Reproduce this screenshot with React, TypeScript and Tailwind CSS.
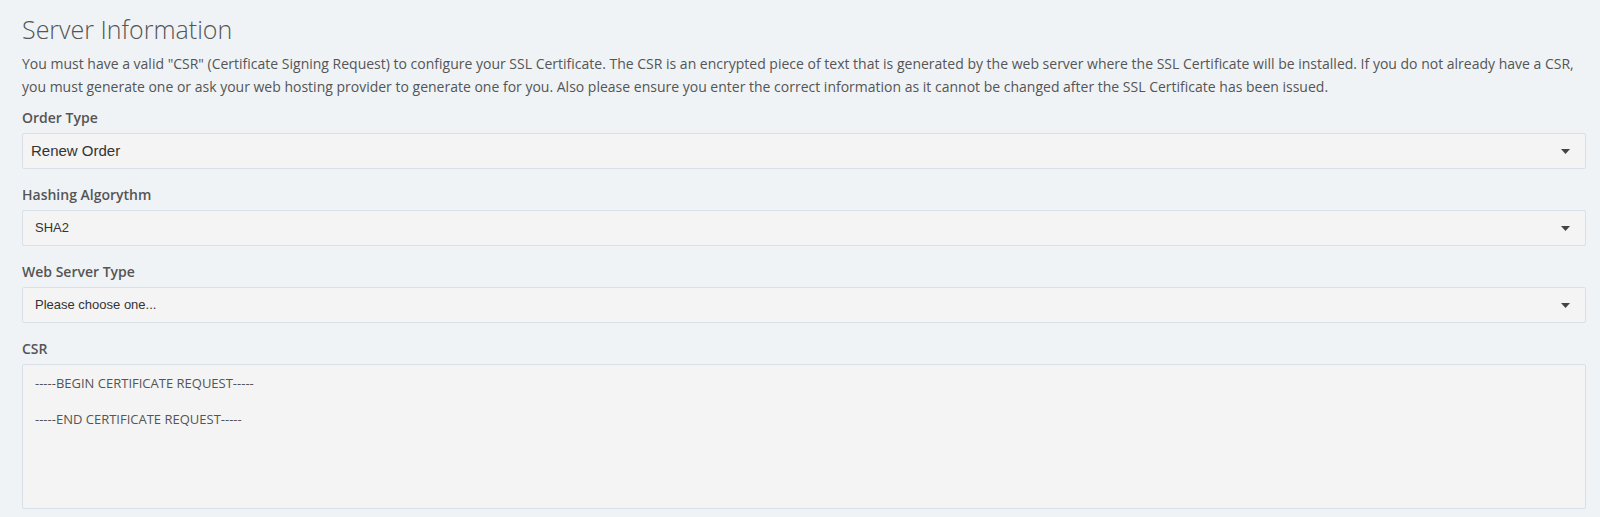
import React from "react";

const caret = (
    <svg width="9" height="5" viewBox="0 0 9 5" className="shrink-0">
        <path d="M0 0 H9 L4.5 5 Z" fill="#444" />
    </svg>
);

function SelectBox({ value, big }: { value: string; big?: boolean }) {
    return (
        <div className="h-[36px] flex items-center justify-between bg-[#f4f4f4] border border-[#d9e0e8] rounded-[2px] pr-[15px]">
            <span
                className={big ? "pl-[8px] text-[15px] text-[#333]" : "pl-[12px] text-[13px] text-[#333]"}
                style={{ fontFamily: '"Liberation Sans", Arial, sans-serif' }}
            >
                {value}
            </span>
            {caret}
        </div>
    );
}

function Field({ label, children }: { label: string; children: React.ReactNode }) {
    return (
        <div className="mt-[16px] first:mt-0">
            <div className="text-[14px] leading-[20px] font-semibold text-[#555] mb-[5px]">{label}</div>
            {children}
        </div>
    );
}

export default function App() {
    return (
        <div
            className="min-h-screen bg-[#eff3f6] pl-[22px] pr-[14px] pt-[13px]"
            style={{ fontFamily: '"Open Sans", "Noto Sans", sans-serif' }}
        >
            {/* Heading */}
            <h2 className="text-[25px] leading-[32px] font-light text-[#555]">Server Information</h2>
            <p className="mt-[7px] text-[14px] leading-[23px] text-[#555]">
                You must have a valid "CSR" (Certificate Signing Request) to configure your SSL Certificate. The CSR is an
                encrypted piece of text that is generated by the web server where the SSL Certificate will be installed. If
                you do not already have a CSR, you must generate one or ask your web hosting provider to generate one for
                you. Also please ensure you enter the correct information as it cannot be changed after the SSL Certificate
                has been issued.
            </p>

            {/* Form */}
            <div className="mt-[10px]">
                <Field label="Order Type">
                    <SelectBox value="Renew Order" big />
                </Field>
                <Field label="Hashing Algorythm">
                    <SelectBox value="SHA2" />
                </Field>
                <Field label="Web Server Type">
                    <SelectBox value="Please choose one..." />
                </Field>
                <Field label="CSR">
                    <textarea
                        readOnly
                        className="block w-full h-[145px] resize-none bg-[#f4f4f4] border border-[#d9e0e8] rounded-[2px] pt-[9px] px-[12px] text-[13px] leading-[18px] text-[#555] outline-none"
                        defaultValue={"-----BEGIN CERTIFICATE REQUEST-----\n\n-----END CERTIFICATE REQUEST-----"}
                    />
                </Field>
            </div>
        </div>
    );
}
